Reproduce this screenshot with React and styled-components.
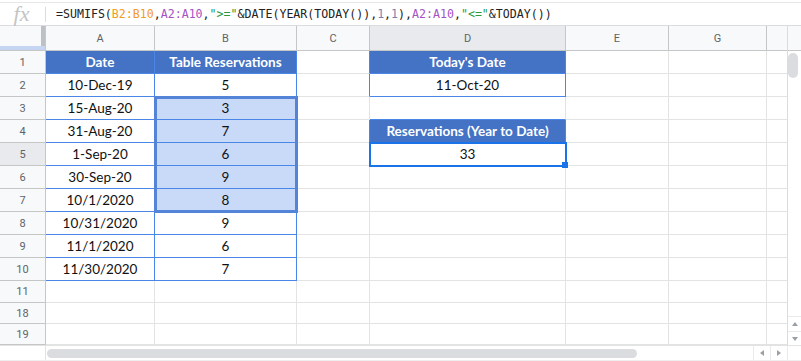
import React from 'react';
import styled, { createGlobalStyle } from 'styled-components';

const Global = createGlobalStyle`
  html, body { margin: 0; padding: 0; background: #fff; }
  body { width: 801px; height: 361px; overflow: hidden; font-family: Lato, "Liberation Sans", sans-serif; }
  *, *::before, *::after { box-sizing: border-box; }
`;

const TABLE = '#4a86e8';
const HEAD = '#4472c4';
const GRID = '#e2e3e3';
const HLINE = '#c4c7c5';
const SELFILL = '#c9daf8';

const Page = styled.div`
  width: 801px;
  height: 361px;
  display: flex;
  flex-direction: column;
  padding-top: 2px;
  background: #fff;
`;

const FormulaBar = styled.div`
  height: 24px;
  display: flex;
  align-items: center;
  border-top: 1px solid #e6e8ea;
  border-bottom: 1px solid #dadce0;
`;

const Fx = styled.div`
  width: 45px;
  text-align: center;
  font-family: "Liberation Serif", serif;
  font-style: italic;
  font-size: 22px;
  color: #c4c4c4;
  line-height: 1;
  padding-right: 2px;
`;

const Divider = styled.div`
  width: 1px;
  height: 15px;
  background: #dadce0;
`;

const Formula = styled.div`
  padding-left: 10px;
  font-family: "DejaVu Sans Mono", "Liberation Mono", monospace;
  font-size: 11.6px;
  color: #222;
  white-space: pre;
`;

const Tok = styled.span`
  color: ${(p) => p.$c};
`;

const Middle = styled.div`
  display: flex;
  height: 319px;
`;

const Sheet = styled.div`
  display: grid;
  grid-template-columns: 46px 109px 142px 73px 196px 103px 98px 20px;
  grid-template-rows: 25px repeat(10, 23px) 22px 21px 21px;
  width: 787px;
`;

const Corner = styled.div`
  grid-column: 1;
  grid-row: 1;
  background: #f8f9fa;
  border-right: 1px solid ${HLINE};
  border-bottom: 1px solid ${HLINE};
  box-shadow: inset 0 -4px 0 #c6d5f2, inset -4px 0 0 #bdc1c6;
`;

const ColHead = styled.div`
  grid-column: ${(p) => p.$c};
  grid-row: 1;
  display: flex;
  align-items: center;
  justify-content: center;
  background: ${(p) => (p.$active ? '#e8eaed' : '#f8f9fa')};
  border-right: ${(p) => (p.$last ? 'none' : `1px solid ${HLINE}`)};
  border-bottom: 1px solid ${HLINE};
  font-family: Roboto, "Liberation Sans", sans-serif;
  font-size: 11px;
  color: #5f6368;
`;

const RowHead = styled.div`
  grid-column: 1;
  grid-row: ${(p) => p.$r};
  display: flex;
  align-items: center;
  justify-content: center;
  background: ${(p) => (p.$active ? '#e8eaed' : '#f8f9fa')};
  border-right: 1px solid ${HLINE};
  border-bottom: 1px solid ${HLINE};
  font-family: Roboto, "Liberation Sans", sans-serif;
  font-size: 11px;
  color: #5f6368;
`;

const Cell = styled.div`
  grid-column: ${(p) => p.$c};
  grid-row: ${(p) => p.$r};
  display: flex;
  align-items: center;
  justify-content: center;
  white-space: nowrap;
  overflow: visible;
  background: ${(p) => (p.$head ? HEAD : p.$sel ? SELFILL : '#fff')};
  border-right: ${(p) => (p.$noRight ? 'none' : `1px solid ${p.$rc || GRID}`)};
  border-bottom: 1px solid ${(p) => p.$bc || GRID};
  font-family: Lato, "Open Sans", sans-serif;
  font-size: 13.5px;
  font-weight: ${(p) => (p.$head ? 700 : 400)};
  color: ${(p) => (p.$head ? '#fff' : '#111')};
`;

const Selection = styled.div`
  grid-column: 3;
  grid-row: 4 / 9;
  margin: -1px;
  border: 3px solid #5384d8;
  position: relative;
  z-index: 1;
  pointer-events: none;
`;

const Active = styled.div`
  grid-column: 5;
  grid-row: 6;
  margin: -1px;
  border: 2px solid #1a73e8;
  position: relative;
  z-index: 2;
  pointer-events: none;
`;

const Handle = styled.div`
  position: absolute;
  right: -3px;
  bottom: -3px;
  width: 6px;
  height: 6px;
  background: #1a73e8;
`;

const VScroll = styled.div`
  width: 14px;
  display: flex;
  flex-direction: column;
  border-left: 1px solid #dadce0;
  background: #fff;
`;

const VHead = styled.div`
  height: 25px;
  background: #f8f9fa;
  border-bottom: 1px solid ${HLINE};
`;

const VTrack = styled.div`
  flex: 1;
  padding: 2px 2px 0 0;
`;

const VThumb = styled.div`
  width: 10px;
  height: 25px;
  border-radius: 5px;
  background: #dadce0;
`;

const ArrowBox = styled.div`
  display: flex;
  align-items: center;
  justify-content: center;
  width: ${(p) => p.$w || 'auto'};
  height: ${(p) => p.$h || 'auto'};
  border-top: ${(p) => (p.$top ? '1px solid #e8eaed' : 'none')};
  border-left: ${(p) => (p.$left ? '1px solid #e8eaed' : 'none')};
`;

const HScroll = styled.div`
  height: 16px;
  display: flex;
  border-top: 1px solid #e3e3e3;
  border-bottom: 1px solid #eeeeee;
`;

const HLeft = styled.div`
  width: 46px;
  border-right: 1px solid #e3e3e3;
`;

const HTrack = styled.div`
  flex: 1;
  padding: 3px 0 0 1px;
`;

const HThumb = styled.div`
  width: 590px;
  height: 9px;
  border-radius: 5px;
  background: #dadce0;
`;

const HCorner = styled.div`
  width: 14px;
  border-left: 1px solid #e8eaed;
`;

const Tri = ({ dir }) => {
  const pts = {
    up: '0,4 3,0 6,4',
    down: '0,0 6,0 3,4',
    left: '4,0 4,6 0,3',
    right: '0,0 0,6 4,3',
  }[dir];
  const horiz = dir === 'left' || dir === 'right';
  return (
    <svg width={horiz ? 4 : 6} height={horiz ? 6 : 4} viewBox={horiz ? '0 0 4 6' : '0 0 6 4'}>
      <polygon points={pts} fill="#9aa0a6" />
    </svg>
  );
};

const COLS = ['A', 'B', 'C', 'D', 'E', 'G', ''];

const rows = [
  { n: 1, cells: { A: { t: 'Date', head: 1 }, B: { t: 'Table Reservations', head: 1 }, D: { t: "Today's Date", head: 1 } } },
  { n: 2, cells: { A: { t: '10-Dec-19' }, B: { t: '5' }, D: { t: '11-Oct-20' } } },
  { n: 3, cells: { A: { t: '15-Aug-20' }, B: { t: '3', sel: 1 } } },
  { n: 4, cells: { A: { t: '31-Aug-20' }, B: { t: '7', sel: 1 }, D: { t: 'Reservations (Year to Date)', head: 1 } } },
  { n: 5, cells: { A: { t: '1-Sep-20' }, B: { t: '6', sel: 1 }, D: { t: '33' } }, active: 1 },
  { n: 6, cells: { A: { t: '30-Sep-20' }, B: { t: '9', sel: 1 } } },
  { n: 7, cells: { A: { t: '10/1/2020' }, B: { t: '8', sel: 1 } } },
  { n: 8, cells: { A: { t: '10/31/2020' }, B: { t: '9' } } },
  { n: 9, cells: { A: { t: '11/1/2020' }, B: { t: '6' } } },
  { n: 10, cells: { A: { t: '11/30/2020' }, B: { t: '7' } } },
  { n: 11, cells: {} },
  { n: 18, cells: {} },
  { n: 19, cells: {} },
];

const dTableRows = [1, 2, 4, 5];

function borders(col, n) {
  const inAB = (col === 'A' || col === 'B') && n >= 1 && n <= 10;
  const inD = col === 'D' && dTableRows.includes(n);
  let rc;
  let bc;
  if (inAB || inD) {
    rc = TABLE;
    bc = TABLE;
  }
  if (col === 'C' && dTableRows.includes(n)) rc = TABLE;
  if (col === 'D' && n === 3) bc = TABLE;
  return { rc, bc };
}

export default function App() {
  return (
    <Page>
      <Global />
      <FormulaBar>
        <Fx>fx</Fx>
        <Divider />
        <Formula>
          <Tok $c="#222">=SUMIFS(</Tok>
          <Tok $c="#f29b26">B2:B10</Tok>
          <Tok $c="#222">,</Tok>
          <Tok $c="#a452c4">A2:A10</Tok>
          <Tok $c="#222">,</Tok>
          <Tok $c="#2a9a3c">"&gt;="</Tok>
          <Tok $c="#222">&amp;DATE(YEAR(TODAY()),</Tok>
          <Tok $c="#7c7fae">1</Tok>
          <Tok $c="#222">,</Tok>
          <Tok $c="#7c7fae">1</Tok>
          <Tok $c="#222">),</Tok>
          <Tok $c="#a452c4">A2:A10</Tok>
          <Tok $c="#222">,</Tok>
          <Tok $c="#2a9a3c">"&lt;="</Tok>
          <Tok $c="#222">&amp;TODAY())</Tok>
        </Formula>
      </FormulaBar>
      <Middle>
        <Sheet>
          <Corner />
          {COLS.map((c, i) => (
            <ColHead key={`h${i}`} $c={i + 2} $active={c === 'D'} $last={i === COLS.length - 1}>
              {c}
            </ColHead>
          ))}
          {rows.map((row, ri) => {
            const gr = ri + 2;
            return (
              <React.Fragment key={row.n}>
                <RowHead $r={gr} $active={row.active}>{row.n}</RowHead>
                {COLS.map((c, ci) => {
                  const cell = row.cells[c] || {};
                  const { rc, bc } = borders(c, row.n);
                  return (
                    <Cell
                      key={`${row.n}-${ci}`}
                      $c={ci + 2}
                      $r={gr}
                      $rc={rc}
                      $bc={bc}
                      $head={cell.head}
                      $sel={cell.sel}
                      $noRight={ci === COLS.length - 1}
                    >
                      {cell.t}
                    </Cell>
                  );
                })}
              </React.Fragment>
            );
          })}
          <Selection />
          <Active>
            <Handle />
          </Active>
        </Sheet>
        <VScroll>
          <VHead />
          <VTrack>
            <VThumb />
          </VTrack>
          <ArrowBox $h="15px" $top>
            <Tri dir="up" />
          </ArrowBox>
          <ArrowBox $h="14px" $top>
            <Tri dir="down" />
          </ArrowBox>
        </VScroll>
      </Middle>
      <HScroll>
        <HLeft />
        <HTrack>
          <HThumb />
        </HTrack>
        <ArrowBox $w="17px" $left>
          <Tri dir="left" />
        </ArrowBox>
        <ArrowBox $w="17px" $left>
          <Tri dir="right" />
        </ArrowBox>
        <HCorner />
      </HScroll>
    </Page>
  );
}
